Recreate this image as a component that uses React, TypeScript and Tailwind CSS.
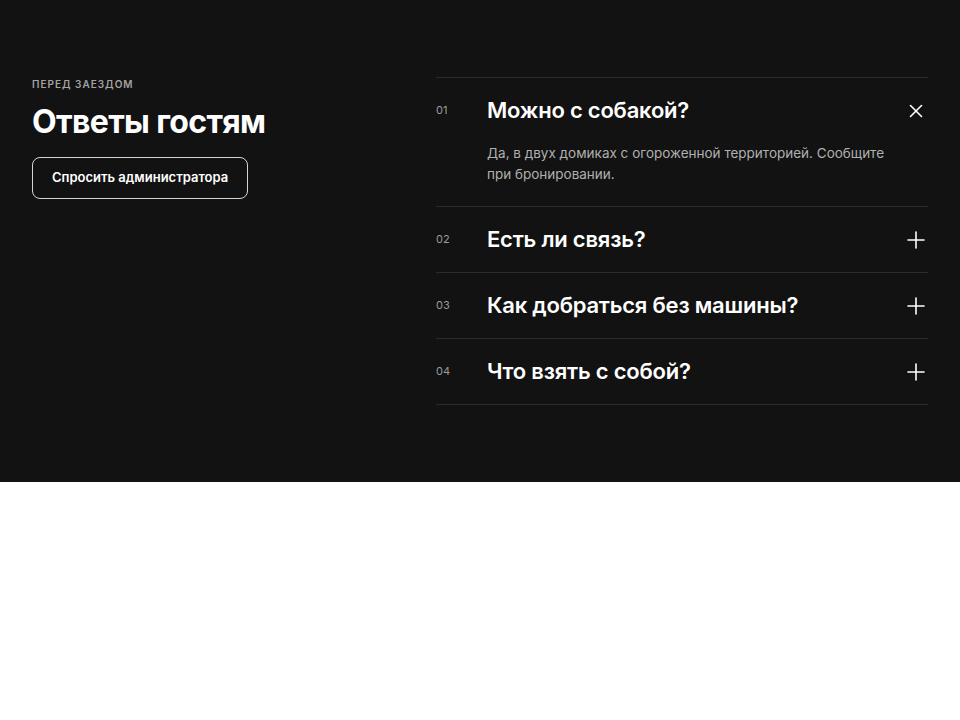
import { useState } from "react";

const faqs = [
  {
    q: "Можно с собакой?",
    a: "Да, в двух домиках с огороженной территорией. Сообщите при бронировании.",
  },
  { q: "Есть ли связь?", a: "Да, мобильная связь и Wi‑Fi на всей территории." },
  { q: "Как добраться без машины?", a: "Электричкой до станции, дальше встретим на трансфере." },
  { q: "Что взять с собой?", a: "Удобную обувь, тёплую одежду на вечер и хорошее настроение." },
];

function PlusIcon({ open }: { open: boolean }) {
  return (
    <svg width="18" height="18" viewBox="0 0 18 18" fill="none" stroke="currentColor" strokeWidth="1.6" strokeLinecap="round">
      {open ? (
        <>
          <path d="M3.5 3.5l11 11" />
          <path d="M14.5 3.5l-11 11" />
        </>
      ) : (
        <>
          <path d="M9 1v16" />
          <path d="M1 9h16" />
        </>
      )}
    </svg>
  );
}

export default function App() {
  const [open, setOpen] = useState<number | null>(0);

  return (
    <div className="min-h-[720px] bg-white" style={{ fontFamily: "Inter, 'Noto Sans', sans-serif" }}>
      <section className="bg-[#121212] px-8 py-[77px] text-white">
        <div className="grid grid-cols-[1fr_492px]">
          <div className="-mt-[1px]">
            <p className="text-[10px] font-semibold uppercase tracking-[0.1em] text-[#a3a3a3] leading-4">
              Перед заездом
            </p>
            <h2 className="mt-[10px] text-[32px] font-bold leading-10 tracking-[-0.02em]">Ответы гостям</h2>
            <button className="mt-[15px] h-[42px] rounded-lg border border-[#d4d4d4] px-[19px] text-[13px] font-semibold text-white">
              Спросить администратора
            </button>
          </div>

          <div className="border-t border-[#2b2b2b]">
            {faqs.map((item, i) => {
              const isOpen = open === i;
              return (
                <div key={item.q} className="border-b border-[#2b2b2b]">
                  <button
                    onClick={() => setOpen(isOpen ? null : i)}
                    className="flex w-full items-center py-5 text-left"
                  >
                    <span className="w-[51px] shrink-0 text-[11px] text-[#9b9b9b]">
                      {String(i + 1).padStart(2, "0")}
                    </span>
                    <span className="flex-1 text-[22px] font-semibold leading-[25px] tracking-[-0.01em]">{item.q}</span>
                    <span className="mr-[3px] text-white">
                      <PlusIcon open={isOpen} />
                    </span>
                  </button>
                  {isOpen && (
                    <p className="max-w-[470px] pb-[21px] pl-[51px] text-[13.5px] leading-[21px] text-[#b0b0b0]">
                      {item.a}
                    </p>
                  )}
                </div>
              );
            })}
          </div>
        </div>
      </section>
    </div>
  );
}
